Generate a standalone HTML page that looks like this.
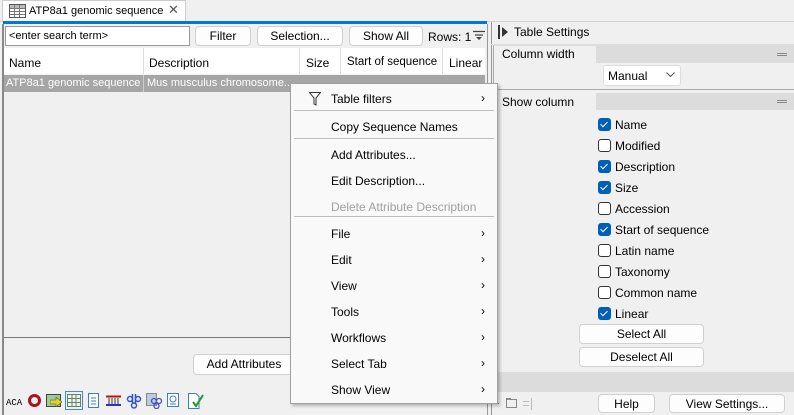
<!DOCTYPE html>
<html><head><meta charset="utf-8">
<style>
*{box-sizing:border-box;margin:0;padding:0}
body{width:794px;height:415px;background:#f0f0f0;font-family:"Liberation Sans",sans-serif;font-size:12px;color:#000;position:relative;overflow:hidden}
.a{position:absolute}
.btn{position:absolute;background:#fdfdfd;border:1px solid #d0d0d0;border-radius:4px;text-align:center;line-height:18px;font-size:12px}
.cb{position:absolute;width:13px;height:13px;border:1px solid #333;border-radius:3px;background:#fff}
.cb.on{background:#005fb8;border-color:#005fb8}
.cb.on:after{content:"";position:absolute;left:3px;top:1px;width:3px;height:6px;border:solid #fff;border-width:0 1px 1px 0;transform:rotate(45deg)}
.lbl{position:absolute;font-size:12px}
.mi{position:absolute;left:40px;font-size:12px}
.ar{position:absolute;left:190px;font-size:12px}
.sep{position:absolute;left:3px;right:3px;height:1px;background:#bdbdbd}
</style></head><body>
<div class="a" style="left:0;top:0;width:794px;height:22px;background:#f0f0f0;border-bottom:1px solid #d0d0d0"></div>
<div class="a" style="left:2px;top:0;width:184px;height:22px;background:#fff;border:1px solid #ccc;border-bottom:none"></div>
<svg class="a" style="left:9px;top:4px" width="17" height="14"><rect x="0.5" y="0.5" width="16" height="13" fill="#fff" stroke="#555"/><rect x="1" y="1" width="15" height="3" fill="#bbb"/><path d="M1 4.5H16M1 7.5H16M1 10.5H16M5.5 1V13M10.5 1V13" stroke="#777"/></svg>
<div class="a" style="left:29px;top:5px;font-size:11px">ATP8a1 genomic sequence</div>
<div class="a" style="left:168px;top:2px;font-size:13px;color:#555">✕</div>
<div class="a" style="left:3px;top:21px;width:484px;height:3px;background:#0078d7"></div>
<div class="a" style="left:2px;top:24px;width:2px;height:391px;background:#888"></div>
<div class="a" style="left:487px;top:24px;width:1px;height:391px;background:#999"></div>
<div class="a" style="left:5px;top:26px;width:185px;height:20px;background:#fff;border:1px solid #999"></div>
<div class="a" style="left:9px;top:30px;font-size:11px">&lt;enter search term&gt;</div>
<div class="btn" style="left:195px;top:26px;width:56px;height:20px">Filter</div>
<div class="btn" style="left:257px;top:26px;width:86px;height:20px">Selection...</div>
<div class="btn" style="left:349px;top:26px;width:74px;height:20px">Show All</div>
<div class="a" style="left:428px;top:30px">Rows: 1</div>
<svg class="a" style="left:473px;top:30px" width="12" height="10"><path d="M0 1.5H12M2 5H10" stroke="#444" stroke-width="1.2"/><path d="M3 7H9L6 10Z" fill="#444"/></svg>
<div class="a" style="left:4px;top:48px;width:481px;height:290px;background:#f0f0f0;border-bottom:1px solid #777"></div>
<div class="a" style="left:4px;top:48px;width:481px;height:26px;background:#fff"></div>
<div class="a" style="left:143px;top:48px;width:1px;height:26px;background:#ddd"></div>
<div class="a" style="left:299px;top:48px;width:1px;height:26px;background:#ddd"></div>
<div class="a" style="left:340px;top:48px;width:1px;height:26px;background:#ddd"></div>
<div class="a" style="left:442px;top:48px;width:1px;height:26px;background:#ddd"></div>
<div class="a" style="left:9px;top:56px">Name</div>
<div class="a" style="left:149px;top:56px">Description</div>
<div class="a" style="left:306px;top:56px">Size</div>
<div class="a" style="left:347px;top:56px;font-size:11.5px">Start of sequence</div>
<div class="a" style="left:449px;top:56px">Linear</div>
<div class="a" style="left:4px;top:75px;width:481px;height:17px;background:#a6a6a6"></div>
<div class="a" style="left:143px;top:75px;width:1px;height:17px;background:#ccc"></div>
<div class="a" style="left:6px;top:77px;color:#fff;font-size:11px">ATP8a1 genomic sequence</div>
<div class="a" style="left:147px;top:77px;color:#fff;font-size:11px">Mus musculus chromosome...</div>
<div class="btn" style="left:193px;top:354px;width:102px;height:21px;line-height:19px">Add Attributes</div>
<div class="a" style="left:6px;top:398px;font-size:9px;font-family:'Liberation Mono',monospace">ACA</div>
<div class="a" style="left:28px;top:394px;width:13px;height:13px;border:3px solid #b0101a;border-radius:50%"></div>
<div class="a" style="left:46px;top:394px;width:15px;height:13px;border:1px solid #444;background:#9c9"></div>
<svg class="a" style="left:50px;top:397px" width="12" height="10"><path d="M0 3H6V0L12 5L6 10V7H0Z" fill="#e8d020" stroke="#555" stroke-width=".6"/></svg>
<div class="a" style="left:65px;top:391px;width:18px;height:19px;border:1px solid #3a8fd8"></div>
<svg class="a" style="left:67px;top:394px" width="14" height="13"><rect x=".5" y=".5" width="13" height="12" fill="#dfd" stroke="#777"/><path d="M1 4.5H13M1 8.5H13M5 1V12M9 1V12" stroke="#777"/></svg>
<svg class="a" style="left:88px;top:393px" width="11" height="15"><rect x=".5" y=".5" width="10" height="14" fill="#fff" stroke="#3a7ec8"/><path d="M3 5H8M3 8H8M3 11H8" stroke="#3a7ec8"/></svg>
<svg class="a" style="left:105px;top:395px" width="17" height="12"><path d="M1 1.5H16" stroke="#c01010" stroke-width="2"/><path d="M4 3V9M7 3V9M10 3V9M13 3V9" stroke="#333"/><path d="M1 10H16" stroke="#3030c0" stroke-width="2"/></svg>
<svg class="a" style="left:126px;top:393px" width="16" height="16"><g fill="none" stroke="#3050d0" stroke-width="1.5"><circle cx="4" cy="6" r="2.5"/><circle cx="12" cy="6" r="2.5"/><circle cx="8" cy="12.5" r="2.5"/><path d="M6.5 1V10M9.5 1V10"/></g></svg>
<svg class="a" style="left:146px;top:393px" width="16" height="16"><rect x=".5" y=".5" width="10" height="12" fill="#bcd" stroke="#888"/><g fill="none" stroke="#4050c0" stroke-width="1.3"><circle cx="8" cy="8" r="2.5"/><circle cx="13" cy="8" r="2.5"/><circle cx="10.5" cy="13" r="2.5"/></g></svg>
<svg class="a" style="left:167px;top:393px" width="12" height="14"><rect x=".5" y=".5" width="11" height="13" fill="#fff" stroke="#3a7ec8"/><circle cx="6" cy="6" r="3" fill="none" stroke="#3a7ec8"/><path d="M3 11H9" stroke="#3a7ec8"/></svg>
<svg class="a" style="left:188px;top:393px" width="16" height="16"><path d="M.5 .5H8L11 3.5V15.5H.5Z" fill="#fff" stroke="#3a7ec8"/><path d="M5 9L8 13L15 2" stroke="#1a9a2a" stroke-width="2" fill="none"/></svg>
<div class="a" style="left:491px;top:22px;width:303px;height:393px;border-left:1px solid #999;background:#f0f0f0"></div>
<div class="a" style="left:498px;top:25px;width:2px;height:14px;background:#333"></div>
<svg class="a" style="left:502px;top:27px" width="6" height="10"><path d="M0 0L6 5L0 10Z" fill="#333"/></svg>
<div class="a" style="left:514px;top:25px">Table Settings</div>
<div class="a" style="left:491px;top:44px;width:303px;height:1px;background:#ddd"></div>
<div class="a" style="left:493px;top:45px;width:301px;height:325px;border-left:1px solid #aaa;border-top:1px solid #ddd"></div>
<div class="a" style="left:596px;top:45px;width:198px;height:18px;background:#dcdcdc"></div>
<div class="a" style="left:777px;top:53px;width:10px;height:3px;border:1px solid #888;border-left:none;border-right:none"></div>
<div class="a" style="left:502px;top:47px">Column width</div>
<div class="a" style="left:603px;top:65px;width:78px;height:21px;background:#fff;border:1px solid #ddd;border-radius:3px"></div>
<div class="a" style="left:608px;top:69px">Manual</div>
<svg class="a" style="left:666px;top:72px" width="9" height="6"><path d="M.5 .5L4.5 4.5L8.5 .5" stroke="#555" fill="none"/></svg>
<div class="a" style="left:494px;top:89px;width:300px;height:1px;background:#aaa"></div>
<div class="a" style="left:596px;top:93px;width:198px;height:17px;background:#dcdcdc"></div>
<div class="a" style="left:777px;top:100px;width:10px;height:3px;border:1px solid #888;border-left:none;border-right:none"></div>
<div class="a" style="left:502px;top:95px">Show column</div>
<div class="cb on" style="left:598px;top:118px"></div><div class="lbl" style="left:615px;top:118px">Name</div>
<div class="cb" style="left:598px;top:139px"></div><div class="lbl" style="left:615px;top:139px">Modified</div>
<div class="cb on" style="left:598px;top:160px"></div><div class="lbl" style="left:615px;top:160px">Description</div>
<div class="cb on" style="left:598px;top:181px"></div><div class="lbl" style="left:615px;top:181px">Size</div>
<div class="cb" style="left:598px;top:202px"></div><div class="lbl" style="left:615px;top:202px">Accession</div>
<div class="cb on" style="left:598px;top:223px"></div><div class="lbl" style="left:615px;top:223px">Start of sequence</div>
<div class="cb" style="left:598px;top:244px"></div><div class="lbl" style="left:615px;top:244px">Latin name</div>
<div class="cb" style="left:598px;top:265px"></div><div class="lbl" style="left:615px;top:265px">Taxonomy</div>
<div class="cb" style="left:598px;top:286px"></div><div class="lbl" style="left:615px;top:286px">Common name</div>
<div class="cb on" style="left:598px;top:307px"></div><div class="lbl" style="left:615px;top:307px">Linear</div>
<div class="btn" style="left:579px;top:324px;width:125px;height:20px">Select All</div>
<div class="btn" style="left:579px;top:347px;width:125px;height:20px">Deselect All</div>
<div class="a" style="left:494px;top:372px;width:300px;height:20px;background:#dcdcdc"></div>
<svg class="a" style="left:493px;top:396px" width="50" height="16"><path d="M0 7.5H6" stroke="#888"/><rect x="13.5" y="3.5" width="10" height="8" fill="none" stroke="#888"/><path d="M13.5 3.5V2.5H17.5V3.5" stroke="#888" fill="none"/><path d="M30 5.5H36M30 9.5H36M38.5 2V14" stroke="#bbb"/></svg>
<div class="btn" style="left:598px;top:394px;width:57px;height:19px">Help</div>
<div class="btn" style="left:669px;top:394px;width:116px;height:19px">View Settings...</div>
<div class="a" style="left:290px;top:83px;width:208px;height:321px;background:#f9f9f9;border:1px solid #a0a0a0;box-shadow:2px 2px 3px rgba(0,0,0,.25)">
<svg class="a" style="left:18px;top:8px" width="12" height="14"><path d="M.5 .5H11.5L7 6V13L5 12V6Z" fill="none" stroke="#333"/></svg>
<div class="mi" style="top:8px">Table filters</div><div class="ar" style="top:7px">›</div>
<div class="sep" style="top:26px"></div>
<div class="mi" style="top:36px">Copy Sequence Names</div>
<div class="sep" style="top:54px"></div>
<div class="mi" style="top:64px">Add Attributes...</div>
<div class="mi" style="top:90px">Edit Description...</div>
<div class="mi" style="top:116px;color:#a0a0a0">Delete Attribute Description</div>
<div class="sep" style="top:132px"></div>
<div class="mi" style="top:143px">File</div><div class="ar" style="top:142px">›</div>
<div class="mi" style="top:169px">Edit</div><div class="ar" style="top:168px">›</div>
<div class="mi" style="top:195px">View</div><div class="ar" style="top:194px">›</div>
<div class="mi" style="top:221px">Tools</div><div class="ar" style="top:220px">›</div>
<div class="mi" style="top:247px">Workflows</div><div class="ar" style="top:246px">›</div>
<div class="mi" style="top:273px">Select Tab</div><div class="ar" style="top:272px">›</div>
<div class="mi" style="top:299px">Show View</div><div class="ar" style="top:298px">›</div>
</div>
</body></html>
